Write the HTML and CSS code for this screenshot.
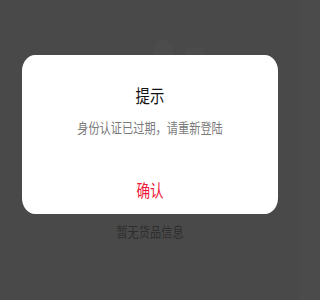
FILE: index.html
```html
<!DOCTYPE html>
<html lang="zh-CN">
<head>
<meta charset="utf-8">
<title>提示</title>
<link rel="stylesheet" href="styles.css">
</head>
<body>
<div class="screen">
  <main class="page">
    <svg class="empty-art" viewBox="0 0 300 179" width="300" height="179" aria-hidden="true">
      <ellipse cx="163" cy="14" rx="10" ry="12" fill="#ffffff"/>
      <rect x="185" y="10" width="19" height="30" rx="2" fill="#ffffff"/>
      <rect x="120" y="22" width="88" height="120" rx="6" fill="#ffffff"/>
    </svg>
    <p class="empty-text"><span class="narrow">暂无货品信息</span></p>
  </main>
  <div class="mask">
    <div class="dialog">
      <div class="dialog-body">
        <h2 class="dialog-title"><span class="narrow">提示</span></h2>
        <p class="dialog-msg"><span class="narrow">身份认证已过期，请重新登陆</span></p>
      </div>
      <button class="dialog-btn" type="button"><span class="narrow">确认</span></button>
    </div>
  </div>
</div>
</body>
</html>
```
FILE: styles.css
```css
html, body {
  margin: 0;
  padding: 0;
  background: #4b4b4b;
}
.screen {
  position: relative;
  width: 300px;
  height: 300px;
  overflow: hidden;
  background: #f6f6f6;
  font-family: "Noto Sans CJK SC", "Noto Sans", sans-serif;
}
.narrow {
  display: inline-block;
  white-space: nowrap;
  transform: scaleX(0.8);
  transform-origin: 50% 50%;
}
.page {
  display: flex;
  flex-direction: column;
  align-items: center;
  padding-top: 38px;
}
.empty-art {
  display: block;
}
.empty-text {
  margin: 4px 0 0;
  font-size: 14px;
  line-height: 20px;
  color: #999999;
  text-align: center;
}
.mask {
  position: absolute;
  inset: 0;
  background: rgba(0, 0, 0, 0.7);
}
.dialog {
  width: 256px;
  margin: 55px auto 0;
  background: #ffffff;
  border-radius: 13px / 16px;
  overflow: hidden;
  display: flex;
  flex-direction: column;
}
.dialog-body {
  padding: 28px 0 28px;
  text-align: center;
}
.dialog-title {
  margin: 0;
  font-size: 18px;
  line-height: 24px;
  font-weight: 400;
  color: #111111;
}
.dialog-msg {
  margin: 10px 0 0;
  font-size: 14px;
  line-height: 20px;
  color: #7a7a7a;
}
.dialog-btn {
  height: 49px;
  border: 0;
  padding: 0;
  background: transparent;
  font-family: inherit;
  font-size: 17px;
  line-height: 49px;
  color: #f0193c;
}
```
